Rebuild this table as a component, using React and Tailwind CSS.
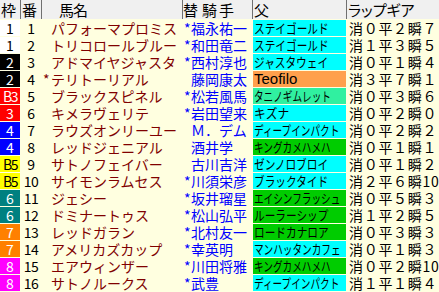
const WAKU = {
  1: 'bg-white text-black',
  2: 'bg-black text-white',
  3: 'bg-[#ff0000] text-white',
  4: 'bg-[#0000ff] text-white',
  5: 'bg-[#ffff00] text-black',
  6: 'bg-[#008080] text-white',
  7: 'bg-[#ff8000] text-white',
  8: 'bg-[#ff00ff] text-white',
};

const CYAN = 'bg-[#00ffff]';
const GREEN = 'bg-[#00cc00]';
const MINT = 'bg-[#30f0a0]';
const ORANGE = 'bg-[#ffa04c]';

const rows = [
  { w: 1, wl: '1', name: 'パフォーマプロミス', jm: true, j: '福永祐一', s: 'ステイゴールド', sc: CYAN, g: '消０平２瞬７' },
  { w: 1, wl: '1', name: 'トリコロールブルー', jm: true, j: '和田竜二', s: 'ステイゴールド', sc: CYAN, g: '消１平３瞬５' },
  { w: 2, wl: '2', name: 'アドマイヤジャスタ', jm: true, j: '西村淳也', s: 'ジャスタウェイ', sc: CYAN, g: '消０平１瞬４' },
  { w: 2, wl: '2', nm: true, name: 'テリトーリアル', jm: false, j: '藤岡康太', s: 'Teofilo', sc: ORANGE, latin: true, g: '消３平７瞬１' },
  { w: 3, wl: 'B3', name: 'ブラックスピネル', jm: true, j: '松若風馬', s: 'タニノギムレット', sc: MINT, g: '消０平３瞬６' },
  { w: 3, wl: '3', name: 'キメラヴェリテ', jm: true, j: '岩田望来', s: 'キズナ', sc: CYAN, g: '消０平２瞬０' },
  { w: 4, wl: '4', name: 'ラウズオンリーユー', jm: false, j: 'Ｍ．デム', s: 'ディープインパクト', sc: CYAN, g: '消０平２瞬２' },
  { w: 4, wl: '4', name: 'レッドジェニアル', jm: false, j: '酒井学', s: 'キングカメハメハ', sc: GREEN, g: '消０平１瞬１' },
  { w: 5, wl: 'B5', name: 'サトノフェイバー', jm: false, j: '古川吉洋', s: 'ゼンノロブロイ', sc: CYAN, g: '消０平１瞬２' },
  { w: 5, wl: 'B5', name: 'サイモンラムセス', jm: true, j: '川須栄彦', s: 'ブラックタイド', sc: CYAN, g: '消２平６瞬10' },
  { w: 6, wl: '6', name: 'ジェシー', jm: true, j: '坂井瑠星', s: 'エイシンフラッシュ', sc: GREEN, g: '消０平５瞬３' },
  { w: 6, wl: '6', name: 'ドミナートゥス', jm: true, j: '松山弘平', s: 'ルーラーシップ', sc: GREEN, g: '消１平２瞬５' },
  { w: 7, wl: '7', name: 'レッドガラン', jm: true, j: '北村友一', s: 'ロードカナロア', sc: GREEN, g: '消０平３瞬３' },
  { w: 7, wl: '7', name: 'アメリカズカップ', jm: true, j: '幸英明', s: 'マンハッタンカフェ', sc: CYAN, g: '消０平１瞬３' },
  { w: 8, wl: '8', name: 'エアウィンザー', jm: true, j: '川田将雅', s: 'キングカメハメハ', sc: GREEN, g: '消０平２瞬10' },
  { w: 8, wl: '8', name: 'サトノルークス', jm: true, j: '武豊', s: 'ディープインパクト', sc: CYAN, g: '消１平１瞬４' },
];

// long sire names get squeezed to fit the cell
const squeeze = (s) =>
  s.length >= 8 ? 'scale-x-[0.74]' : s.length >= 7 ? 'scale-x-[0.82]' : 'scale-x-[0.9]';

export default function App() {
  return (
    <div className="w-[439px] h-[292px] overflow-hidden bg-[#ffffe0] font-['Noto_Sans_CJK_JP',sans-serif] text-black">
      {/* Header */}
      <div className="flex h-[19px] mb-px bg-[#f0f0f0] text-[15px] leading-[19px] [font-feature-settings:'palt']">
        <div className="w-[20px] pl-px">枠</div>
        <div className="w-[21px] border-l border-[#707070] pl-px">番</div>
        <div className="w-[141px] border-l border-[#707070] pl-[17px] tracking-[-1px]">馬名</div>
        <div className="w-[70px] border-l border-[#707070] flex">
          <span>替</span>
          <span className="ml-[4px] tracking-[2px]">騎手</span>
        </div>
        <div className="w-[94px] border-l border-[#707070] pl-px">父</div>
        <div className="flex-1 border-l border-[#707070] pl-px">ラップギア</div>
      </div>

      {/* Rows */}
      <div className="grid grid-cols-[20px_20px_140px_69px_93px_1fr] gap-x-px gap-y-px">
        {rows.map((r, i) => (
          <div key={i} className="contents">
            <div className={`h-[16px] flex items-center justify-center text-[14px] leading-[16px] ${WAKU[r.w]} ${r.wl.length > 1 ? 'tracking-[-1.5px] text-[13px]' : ''}`}>
              {r.wl}
            </div>
            <div className="h-[16px] flex items-center justify-center text-[14px] leading-[16px] tracking-[-0.5px]">
              {i + 1}
            </div>
            <div className="h-[16px] flex items-center text-[14px] leading-[16px] text-[#800000] whitespace-nowrap">
              <span className="w-[9px] pl-px shrink-0">{r.nm ? '*' : ''}</span>
              <span>{r.name}</span>
            </div>
            <div className="h-[16px] flex items-center text-[14px] leading-[16px] text-[#0000ff] whitespace-nowrap">
              <span className="w-[8px] pl-px shrink-0">{r.jm ? '*' : ''}</span>
              <span>{r.j}</span>
            </div>
            <div className={`h-[16px] flex items-center pl-px whitespace-nowrap overflow-hidden ${r.sc}`}>
              {r.latin ? (
                <span className="font-['Liberation_Sans',sans-serif] text-[15px] leading-[16px]">{r.s}</span>
              ) : (
                <span className={`inline-block origin-left text-[13px] leading-[16px] ${squeeze(r.s)}`}>{r.s}</span>
              )}
            </div>
            <div className="h-[16px] flex items-center pl-[2px] text-[14px] leading-[16px] tracking-[0.7px] whitespace-nowrap">
              {r.g}
            </div>
          </div>
        ))}
      </div>
    </div>
  );
}
